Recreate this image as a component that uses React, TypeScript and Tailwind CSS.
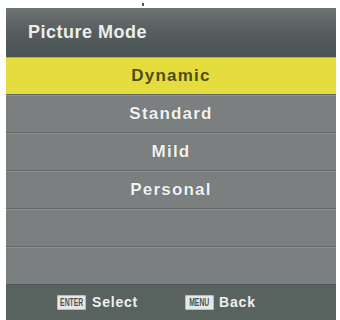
import React from "react";

const font = { fontFamily: '"Liberation Sans", Arial, sans-serif' };

function Row({ label }: { label?: string }) {
  return (
    <div className="flex h-[38px] shrink-0 items-center justify-center border-t border-[#62676a] bg-[#7b7f80] shadow-[inset_0_1px_0_#8c9091]">
      {label && (
        <span className="text-[17px] font-bold tracking-[1.2px] text-[#f1f3f2] [text-shadow:0_0_1px_rgba(0,0,0,0.35)]">
          {label}
        </span>
      )}
    </div>
  );
}

function Key({ label }: { label: string }) {
  return (
    <span className="flex h-[15px] w-[29px] items-center justify-center rounded-[2px] bg-[#e6e8e7] shadow-[inset_0_0_0_1px_#b8bcbb]">
      <span className="inline-block scale-x-[0.62] text-[11px] leading-none font-bold text-[#4b5250]">{label}</span>
    </span>
  );
}

export default function App() {
  return (
    <div className="relative h-[320px] w-[340px] bg-white px-[6px] pt-[8px]" style={font}>
      <div className="absolute left-[142px] top-[3px] h-[3px] w-[2px] bg-[#555]" />
      <div className="flex h-[312px] w-[330px] flex-col overflow-hidden bg-[#7b7f80]">
        <div className="flex h-[49px] shrink-0 items-center bg-gradient-to-b from-[#6f7475] via-[#565d5f] to-[#4c5355] pl-[22px]">
          <span className="text-[18px] font-bold tracking-[0.5px] text-[#eceeed]">Picture Mode</span>
        </div>
        <div className="flex h-[37px] shrink-0 items-center justify-center border-t border-[#b9b136] bg-[#e5dd3e]">
          <span className="text-[17px] font-bold tracking-[1.2px] text-[#4d4c1a]">Dynamic</span>
        </div>
        <Row label="Standard" />
        <Row label="Mild" />
        <Row label="Personal" />
        <Row />
        <Row />
        <div className="flex flex-1 items-center border-t border-[#4f5857] bg-[#58625f] pl-[51px]">
          <Key label="ENTER" />
          <span className="ml-[6px] text-[14px] font-bold tracking-[0.8px] text-[#eef0ef]">Select</span>
          <span className="ml-[47px]">
            <Key label="MENU" />
          </span>
          <span className="ml-[5px] text-[14px] font-bold tracking-[0.8px] text-[#eef0ef]">Back</span>
        </div>
      </div>
    </div>
  );
}
